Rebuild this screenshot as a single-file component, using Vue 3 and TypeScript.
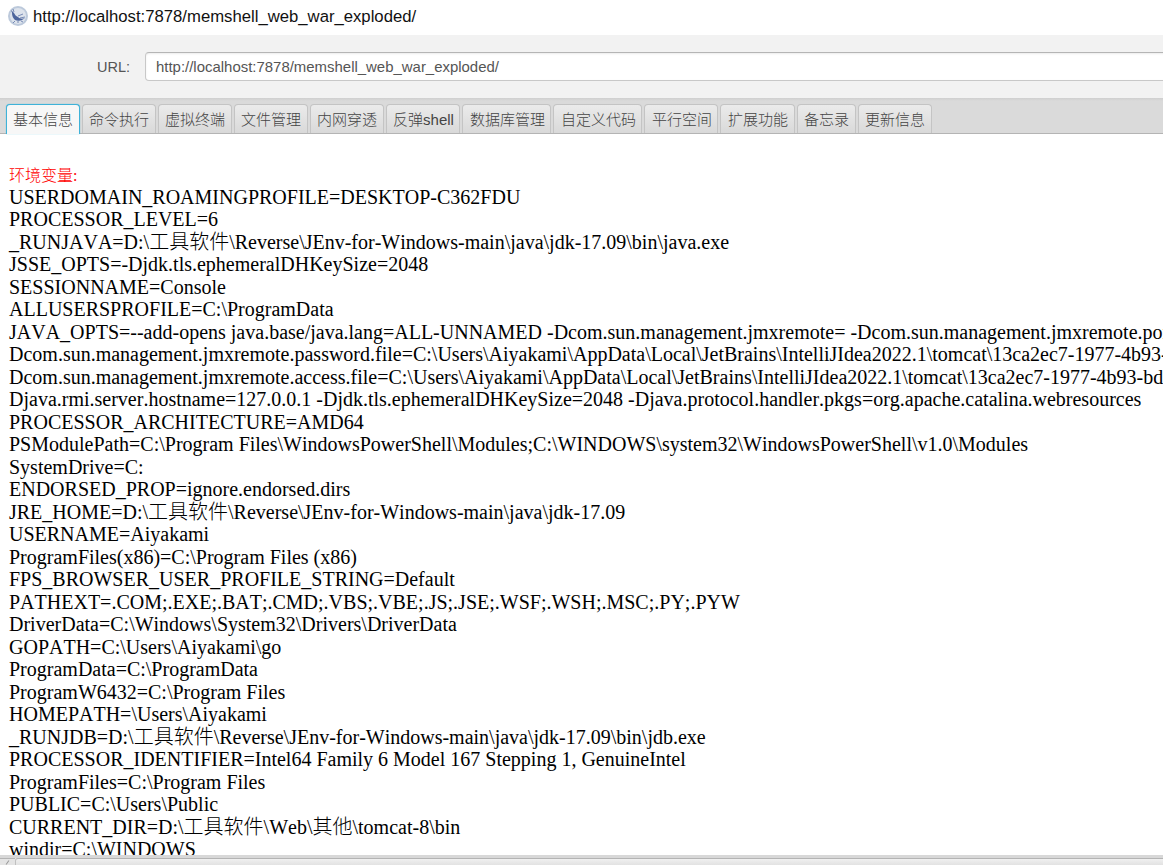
<script setup lang="ts">
const url = 'http://localhost:7878/memshell_web_war_exploded/'
const tabs: string[] = ['基本信息','命令执行','虚拟终端','文件管理','内网穿透','反弹shell','数据库管理','自定义代码','平行空间','扩展功能','备忘录','更新信息']
const lines: string[] = [
'USERDOMAIN_ROAMINGPROFILE=DESKTOP-C362FDU',
'PROCESSOR_LEVEL=6',
'_RUNJAVA=D:\\工具软件\\Reverse\\JEnv-for-Windows-main\\java\\jdk-17.09\\bin\\java.exe',
'JSSE_OPTS=-Djdk.tls.ephemeralDHKeySize=2048',
'SESSIONNAME=Console',
'ALLUSERSPROFILE=C:\\ProgramData',
'JAVA_OPTS=--add-opens java.base/java.lang=ALL-UNNAMED -Dcom.sun.management.jmxremote= -Dcom.sun.management.jmxremote.port=1099 -',
'Dcom.sun.management.jmxremote.password.file=C:\\Users\\Aiyakami\\AppData\\Local\\JetBrains\\IntelliJIdea2022.1\\tomcat\\13ca2ec7-1977-4b93-bd',
'Dcom.sun.management.jmxremote.access.file=C:\\Users\\Aiyakami\\AppData\\Local\\JetBrains\\IntelliJIdea2022.1\\tomcat\\13ca2ec7-1977-4b93-bd',
'Djava.rmi.server.hostname=127.0.0.1 -Djdk.tls.ephemeralDHKeySize=2048 -Djava.protocol.handler.pkgs=org.apache.catalina.webresources',
'PROCESSOR_ARCHITECTURE=AMD64',
'PSModulePath=C:\\Program Files\\WindowsPowerShell\\Modules;C:\\WINDOWS\\system32\\WindowsPowerShell\\v1.0\\Modules',
'SystemDrive=C:',
'ENDORSED_PROP=ignore.endorsed.dirs',
'JRE_HOME=D:\\工具软件\\Reverse\\JEnv-for-Windows-main\\java\\jdk-17.09',
'USERNAME=Aiyakami',
'ProgramFiles(x86)=C:\\Program Files (x86)',
'FPS_BROWSER_USER_PROFILE_STRING=Default',
'PATHEXT=.COM;.EXE;.BAT;.CMD;.VBS;.VBE;.JS;.JSE;.WSF;.WSH;.MSC;.PY;.PYW',
'DriverData=C:\\Windows\\System32\\Drivers\\DriverData',
'GOPATH=C:\\Users\\Aiyakami\\go',
'ProgramData=C:\\ProgramData',
'ProgramW6432=C:\\Program Files',
'HOMEPATH=\\Users\\Aiyakami',
'_RUNJDB=D:\\工具软件\\Reverse\\JEnv-for-Windows-main\\java\\jdk-17.09\\bin\\jdb.exe',
'PROCESSOR_IDENTIFIER=Intel64 Family 6 Model 167 Stepping 1, GenuineIntel',
'ProgramFiles=C:\\Program Files',
'PUBLIC=C:\\Users\\Public',
'CURRENT_DIR=D:\\工具软件\\Web\\其他\\tomcat-8\\bin',
'windir=C:\\WINDOWS',
]
</script>

<template>
  <div class="window">
    <header class="titlebar">
      <svg class="favicon" width="20" height="20" viewBox="0 0 20 20">
        <circle cx="10" cy="10" r="10" fill="#bcc9db" />
        <circle cx="10" cy="10" r="8" fill="#dde3ec" />
        <g opacity=".85">
          <path d="M3 4c0 1 1 2 1 3 0 3 1 5 3 7 2 1 5 1 7 0l3-2c-3 1-5 1-7-1-2-1-3-2-4-4-1-1-2-2-3-3z" fill="#34508f" />
          <path d="M5 3l1 3M7 15l-2 2M10 15v2M13 15l2 1M10 10l5-2M12 12l5-1" stroke="#4a639d" stroke-width=".8" fill="none" />
        </g>
      </svg>
      <span class="title">{{ url }}</span>
    </header>
    <div class="urlpanel">
      <label class="urllabel">URL:</label>
      <div class="urlinput">{{ url }}</div>
    </div>
    <nav class="tabbar">
      <div v-for="(t, i) in tabs" :key="t" class="tab" :class="{ active: i === 0 }">{{ t }}</div>
    </nav>
    <main class="content">
      <div class="line headline"><span class="heading">环境变量:</span></div>
      <div v-for="(l, i) in lines" :key="i" class="line">{{ l }}</div>
    </main>
    <div class="bottombar">
      <div class="gutter"><span class="grip"></span></div>
      <div class="nextinput"></div>
    </div>
  </div>
</template>

<style>
html, body { margin: 0; height: 100%; overflow: hidden; background: #fff; }
</style>

<style scoped>
.window {
  width: 1163px;
  height: 865px;
  display: flex;
  flex-direction: column;
  overflow: hidden;
  background: #fff;
}
.titlebar {
  height: 35px;
  flex: none;
  display: flex;
  align-items: center;
  gap: 5px;
  padding-left: 8px;
  box-sizing: border-box;
  background: #fff;
}
.favicon { flex: none; margin-top: -3px; }
.title {
  font: 16.7px "Liberation Sans", Arial, sans-serif;
  color: #111;
  margin-top: -1px;
}
.urlpanel {
  height: 63px;
  flex: none;
  display: flex;
  align-items: center;
  box-sizing: border-box;
  background: #f2f2f2;
  padding-left: 97px;
}
.urllabel {
  font: 14.5px "Liberation Sans", Arial, sans-serif;
  color: #555;
  width: 48px;
  flex: none;
}
.urlinput {
  flex: 1;
  margin-right: -20px;
  height: 29px;
  box-sizing: border-box;
  border: 1px solid #c8c8c8;
  border-top-color: #b5b5b5;
  border-radius: 4px;
  background: #fff;
  box-shadow: inset 0 1px 2px rgba(0,0,0,.08);
  padding: 0 10px;
  font: 14.95px/27px "Liberation Sans", Arial, sans-serif;
  color: #555;
}
.tabbar {
  height: 36px;
  flex: none;
  display: flex;
  align-items: flex-end;
  gap: 2px;
  padding-left: 6px;
  box-sizing: border-box;
  background: linear-gradient(#cfcfcf, #dadada 3px);
  border-bottom: 1px solid #b4b4b4;
}
.tab {
  height: 29px;
  box-sizing: border-box;
  padding: 0 5.5px 0 6.5px;
  border: 1px solid #c4c4c4;
  border-bottom: none;
  border-radius: 4px 4px 0 0;
  background: linear-gradient(#ebebeb, #d9d9d9);
  font: 300 15px/29px "Liberation Sans", "Noto Sans CJK SC", sans-serif;
  color: #444;
  white-space: nowrap;
}
.tab.active {
  background: #f7f7f7;
  border-color: #3fb2d8;
  height: 30px;
  padding: 0 6px;
  margin-bottom: -1px;
  margin-right: -0.5px;
  box-shadow: 0 0 1px #3fb2d8;
}
.content {
  flex: 1;
  min-height: 0;
  overflow: hidden;
  padding: 27px 0 0 9px;
  font: 300 20px/22.5px "Liberation Serif", "Noto Sans CJK SC", serif;
  font-kerning: none;
  color: #000;
}
.headline {
  padding-top: 2px;
  margin-bottom: -2px;
}
.heading {
  color: #f00;
  font-size: 16px;
}
.line { white-space: nowrap; }
.bottombar {
  height: 10px;
  flex: none;
  box-sizing: border-box;
  display: flex;
  background: #e4e4e4;
  border-top: 3px solid #d8d8d8;
}
.gutter {
  width: 15px;
  flex: none;
  display: flex;
  align-items: center;
  padding-left: 5px;
  box-sizing: border-box;
  border-top: 1px solid #b4b4b4;
}
.grip {
  width: 5px;
  height: 1px;
  background: #999;
  transform: rotate(-55deg);
}
.nextinput {
  flex: 1;
  box-sizing: border-box;
  background: linear-gradient(#f0f0f0, #e2e2e2);
  border-top: 1px solid #b4b4b4;
  border-left: 1px solid #c0c0c0;
  border-radius: 3px 0 0 0;
}
</style>
